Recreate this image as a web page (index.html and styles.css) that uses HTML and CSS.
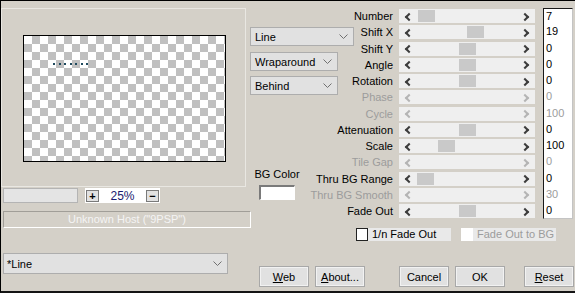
FILE: index.html
```html
<!DOCTYPE html>
<html lang="en">
<head>
    <meta charset="UTF-8">
    <title>Line Filter</title>
    <link rel="stylesheet" href="styles.css">
</head>
<body>
<div class="window">
    <!-- Preview side -->
    <div class="left">
        <div class="preview">
            <div class="checker">
                <div class="dots">
                    <span></span><span></span><span></span><span></span><span></span><span></span><span></span>
                </div>
            </div>
        </div>
        <div class="zoom-row">
            <div class="zoom-blank"></div>
            <div class="zoom-box">
                <span class="zoom-btn">+</span>
                <span class="zoom-val">25%</span>
                <span class="zoom-btn">&minus;</span>
            </div>
        </div>
        <div class="status">Unknown Host ("9PSP")</div>
        <div class="dropdown preset">
            <span>*Line</span>
            <svg width="9" height="5" viewBox="0 0 9 5"><path d="M0.5 0.5 L4.5 4.5 L8.5 0.5" fill="none" stroke="#707070"/></svg>
        </div>
    </div>

    <!-- Controls side -->
    <div class="right">
        <div class="top">
            <div class="mid">
                <div class="dropdown wide">
                    <span>Line</span>
                    <svg width="9" height="5" viewBox="0 0 9 5"><path d="M0.5 0.5 L4.5 4.5 L8.5 0.5" fill="none" stroke="#707070"/></svg>
                </div>
                <div class="dropdown narrow">
                    <span>Wraparound</span>
                    <svg width="9" height="5" viewBox="0 0 9 5"><path d="M0.5 0.5 L4.5 4.5 L8.5 0.5" fill="none" stroke="#707070"/></svg>
                </div>
                <div class="dropdown narrow behind">
                    <span>Behind</span>
                    <svg width="9" height="5" viewBox="0 0 9 5"><path d="M0.5 0.5 L4.5 4.5 L8.5 0.5" fill="none" stroke="#707070"/></svg>
                </div>
                <div class="bg-color">
                    <span>BG Color</span>
                    <div class="swatch"></div>
                </div>
            </div>

            <div class="sliders">
                <div class="row"><span class="label">Number</span><div class="track"><i class="thumb" style="left:19px"></i></div><span class="value first">7</span></div>
                <div class="row"><span class="label">Shift X</span><div class="track"><i class="thumb" style="left:68px"></i></div><span class="value">19</span></div>
                <div class="row"><span class="label">Shift Y</span><div class="track"><i class="thumb" style="left:60px"></i></div><span class="value">0</span></div>
                <div class="row"><span class="label">Angle</span><div class="track"><i class="thumb" style="left:60px"></i></div><span class="value">0</span></div>
                <div class="row"><span class="label">Rotation</span><div class="track"><i class="thumb" style="left:60px"></i></div><span class="value">0</span></div>
                <div class="row off"><span class="label">Phase</span><div class="track"></div><span class="value">0</span></div>
                <div class="row off"><span class="label">Cycle</span><div class="track"></div><span class="value">100</span></div>
                <div class="row"><span class="label">Attenuation</span><div class="track"><i class="thumb" style="left:60px"></i></div><span class="value">0</span></div>
                <div class="row"><span class="label">Scale</span><div class="track"><i class="thumb" style="left:39px"></i></div><span class="value">100</span></div>
                <div class="row off"><span class="label">Tile Gap</span><div class="track"></div><span class="value">0</span></div>
                <div class="row"><span class="label">Thru BG Range</span><div class="track"><i class="thumb" style="left:18px"></i></div><span class="value">0</span></div>
                <div class="row off"><span class="label">Thru BG Smooth</span><div class="track"></div><span class="value">30</span></div>
                <div class="row"><span class="label">Fade Out</span><div class="track"><i class="thumb" style="left:60px"></i></div><span class="value last">0</span></div>
            </div>
        </div>

        <div class="checks">
            <label class="check"><span class="box"></span><span class="check-text">1/n Fade Out</span></label>
            <label class="check off"><span class="box"></span><span class="check-text">Fade Out to BG</span></label>
        </div>

        <div class="buttons">
            <button class="btn"><u>W</u>eb</button>
            <button class="btn"><u>A</u>bout...</button>
            <button class="btn cancel">Cancel</button>
            <button class="btn">OK</button>
            <button class="btn reset"><u>R</u>eset</button>
        </div>
    </div>
</div>
</body>
</html>
```

FILE: styles.css
```css
/* Base */
* {
    box-sizing: border-box;
}

body {
    margin: 0;
    width: 575px;
    height: 293px;
    overflow: hidden;
    background: #d4d0c8;
    font-family: "Liberation Sans", Arial, sans-serif;
    font-size: 11px;
    color: #000;
}

.window {
    display: flex;
    height: 293px;
    border-top: 1px solid #000;
    border-left: 1px solid #000;
    border-bottom: 2px solid #141414;
}

/* Left column: preview */
.left {
    width: 249px;
    padding-top: 7px;
    display: flex;
    flex-direction: column;
}

.preview {
    width: 245px;
    height: 179px;
    border: 1px solid #e9e7e2;
    padding: 26px 0 0 21px;
}

.checker {
    width: 203px;
    height: 127px;
    border: 1px solid #000;
    background-color: #fff;
    background-image: conic-gradient(#c0c0c0 25%, transparent 0 50%, #c0c0c0 0 75%, transparent 0);
    background-size: 16px 16px;
}

.dots {
    display: flex;
    gap: 3.5px;
    padding: 27px 0 0 29px;
}

.dots span {
    width: 2px;
    height: 2px;
    background: #1f4a5e;
}

.zoom-row {
    display: flex;
    gap: 7px;
    margin: 1px 0 0 2px;
}

.zoom-blank {
    width: 75px;
    height: 15px;
    background: #e4e4e4;
    border: 1px solid #b4b4b4;
}

.zoom-box {
    width: 75px;
    height: 15px;
    background: #fff;
    display: flex;
    align-items: center;
    justify-content: space-between;
    padding: 0 1px;
}

.zoom-btn {
    width: 13px;
    height: 12px;
    background: #e2e2e2;
    border: 1px solid #7a7a7a;
    font-weight: bold;
    font-size: 11px;
    line-height: 10px;
    text-align: center;
}

.zoom-val {
    color: #1a1a70;
    font-size: 12px;
}

.status {
    width: 248px;
    height: 17px;
    margin: 8px 0 0 2px;
    border-top: 1px solid #a19e98;
    border-left: 1px solid #a19e98;
    border-right: 1px solid #fff;
    border-bottom: 1px solid #fff;
    color: #f4f4f4;
    text-align: center;
    line-height: 14px;
}

/* Dropdowns */
.dropdown {
    display: flex;
    align-items: center;
    justify-content: space-between;
    height: 19px;
    background: #e1e1e1;
    border: 1px solid #adadad;
    padding: 0 5px 0 4px;
}

.preset {
    width: 225px;
    height: 21px;
    margin: 25px 0 0 2px;
    padding-left: 3px;
}

/* Right side */
.right {
    flex: 1;
    display: flex;
    flex-direction: column;
    padding-top: 7px;
}

.top {
    display: flex;
}

.mid {
    width: 104px;
    padding-top: 19px;
}

.wide {
    width: 104px;
}

.narrow {
    width: 88px;
    margin-top: 6px;
}

.behind {
    margin-top: 5px;
}

.bg-color {
    width: 36px;
    margin: 73px 0 0 9px;
    display: flex;
    flex-direction: column;
    align-items: center;
    white-space: nowrap;
}

.swatch {
    width: 36px;
    height: 15px;
    margin-top: 5px;
    background: #fff;
    border-top: 2px solid #7a7a7a;
    border-left: 2px solid #7a7a7a;
    border-right: 1px solid #fff;
    border-bottom: 1px solid #fff;
}

/* Slider rows */
.sliders {
    display: flex;
    flex-direction: column;
}

.row {
    display: flex;
    align-items: center;
    height: 16.25px;
}

.label {
    width: 39px;
    margin-right: 6px;
    display: flex;
    justify-content: flex-end;
    white-space: nowrap;
}

.track {
    position: relative;
    width: 136px;
    height: 14px;
    background: #efefef;
}

.track::before,
.track::after {
    content: "";
    position: absolute;
    top: 4.5px;
    width: 4px;
    height: 4px;
    border: solid #3c3c3c;
    border-width: 0 0 2px 2px;
}

.track::before {
    left: 7px;
    transform: rotate(45deg);
}

.track::after {
    right: 7px;
    transform: rotate(-135deg);
}

.thumb {
    position: absolute;
    top: 1px;
    width: 17px;
    height: 12px;
    background: #c9c9c9;
}

.value {
    width: 30px;
    height: 100%;
    margin-left: 8px;
    padding-left: 2px;
    background: #fff;
    border-left: 1px solid #1a1a1a;
    border-right: 1px solid #c4c4c4;
    line-height: 15px;
}

.value.first {
    border-top: 1px solid #1a1a1a;
}

.value.last {
    border-bottom: 1px solid #c4c4c4;
}

.off .label,
.off .value {
    color: #9c9c9c;
}

.off .track::before,
.off .track::after {
    border-color: #b4b4b4;
}

/* Checkboxes */
.checks {
    display: flex;
    gap: 10px;
    margin: 9px 0 0 106px;
}

.check {
    display: flex;
    height: 13px;
}

.box {
    width: 12px;
    height: 13px;
    background: #fff;
    border: 1px solid #222;
}

.check-text {
    width: 83px;
    background: #e9e9e9;
    padding-left: 4px;
    line-height: 13px;
    white-space: nowrap;
    overflow: hidden;
}

.check.off .box {
    border: none;
}

.check.off .check-text {
    color: #9c9c9c;
}

/* Buttons */
.buttons {
    display: flex;
    gap: 6px;
    margin: 25px 0 0 9px;
}

.btn {
    width: 50px;
    height: 21px;
    padding: 0;
    background: #e1e1e1;
    border: 1px solid #a8a8a8;
    box-shadow: inset 0 0 0 1px #f2f2f2;
    font-family: "Liberation Sans", Arial, sans-serif;
    font-size: 11px;
    color: #000;
}

.btn.cancel {
    margin-left: 28px;
}

.btn.reset {
    margin-left: 13px;
}
```
